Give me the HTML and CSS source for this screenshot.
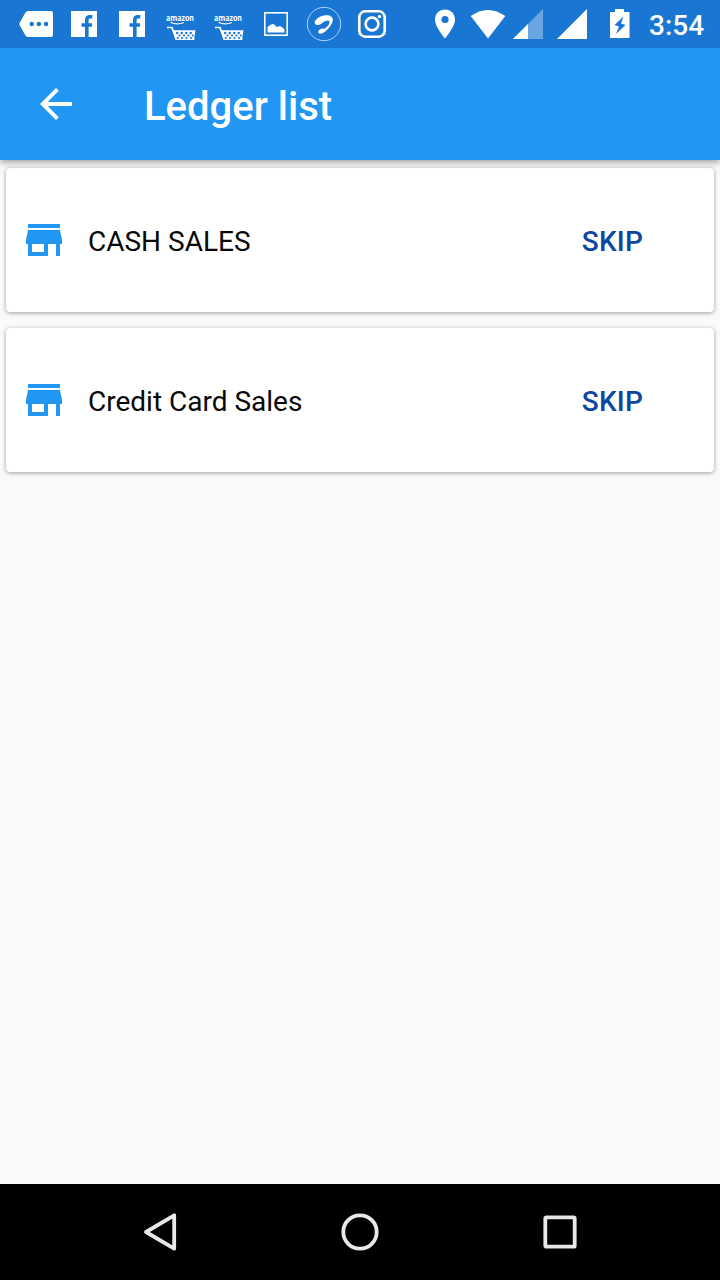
FILE: index.html
```html
<!DOCTYPE html>
<html lang="en">
<head>
<meta charset="utf-8">
<title>Ledger list</title>
<link rel="stylesheet" href="styles.css">
</head>
<body>
<svg class="symbols" aria-hidden="true">
  <symbol id="facebook" viewBox="0 0 48 48">
    <rect x="11" y="11" width="26" height="26" fill="#fff"/>
    <path d="M32.300 16.700h-2.300q-3.200 0-3.200 3.200V37M21.500 25h10.500" fill="none" stroke="#1976d2" stroke-width="3.600"/>
  </symbol>
  <symbol id="cart" viewBox="0 0 48 48">
    <path d="M14.500 22.200q6 3 13.500 .3" fill="none" stroke="#fff" stroke-width="1.200"/>
    <path d="M11 27.500h5l4 11.500h18.500" fill="none" stroke="#fff" stroke-width="1.700"/>
    <path d="M17 30.300h22.500l-1.500 9.400H20z" fill="#fff"/>
    <g fill="#1976d2"><circle cx="21.200" cy="33" r="1.200"/><circle cx="25.700" cy="33" r="1.200"/><circle cx="30.200" cy="33" r="1.200"/><circle cx="34.700" cy="33" r="1.200"/><circle cx="23.500" cy="35.500" r="1.100"/><circle cx="28" cy="35.500" r="1.100"/><circle cx="32.500" cy="35.500" r="1.100"/><circle cx="36.700" cy="35.500" r="1"/><circle cx="21.700" cy="38" r="1.100"/><circle cx="26" cy="38" r="1.100"/><circle cx="30.500" cy="38" r="1.100"/><circle cx="35" cy="38" r="1.100"/></g>
  </symbol>
  <symbol id="store" viewBox="0 0 24 24">
    <path d="M20 4H4v2h16V4zm1 10v-2l-1-5H4l-1 5v2h1v6h10v-6h4v6h2v-6h1zm-9 4H6v-4h6v4z" fill="#2196f3"/>
  </symbol>
</svg>

<div class="screen">
  <div class="status-bar">
    <div class="notifications">
      <svg class="status-icon" viewBox="0 0 48 48">
        <path d="M16 11h23q2 0 2 2v22q0 2-2 2H16q-1.500 0-2.500-1.500L7 24l6.500-11.500Q14.500 11 16 11z" fill="#fff"/>
        <g fill="#1976d2"><circle cx="19.700" cy="24" r="2.200"/><circle cx="26.900" cy="24" r="2.200"/><circle cx="34.100" cy="24" r="2.200"/></g>
      </svg>
      <svg class="status-icon"><use href="#facebook"/></svg>
      <svg class="status-icon"><use href="#facebook"/></svg>
      <svg class="status-icon" viewBox="0 0 48 48"><text class="amazon-text" x="10" y="20.500" textLength="28" lengthAdjust="spacingAndGlyphs">amazon</text><use href="#cart"/></svg>
      <svg class="status-icon" viewBox="0 0 48 48"><text class="amazon-text" x="10" y="20.500" textLength="28" lengthAdjust="spacingAndGlyphs">amazon</text><use href="#cart"/></svg>
      <svg class="status-icon" viewBox="0 0 48 48">
        <rect x="12.800" y="12.800" width="22.400" height="22.400" fill="none" stroke="#fff" stroke-width="1.600"/>
        <path d="M15.500 32.500V27l2-1.500 1.500-1 2.500-.5 3.500 3 3-1 2.500 1.500 2 2v3z" fill="#fff"/>
      </svg>
      <svg class="status-icon" viewBox="0 0 48 48">
        <circle cx="24" cy="24" r="16.700" fill="none" stroke="#a9d4fa" stroke-width="1"/>
        <path d="M17 25C12.500 24 15 19 20.500 16.500c6-2.500 12-1.500 12.300 3 .2 4.500-5.300 11-9.800 13.500-2.500 1.300-5 .8-4.700-1.200.3-2.300 3.500-4 5.700-2.800 2.500-1.500 5.500-4.500 5.500-7 0-2-2.500-2-5-.5-2.500 1.400-4.500 4-7.500 3.500z" fill="#fff"/>
      </svg>
      <svg class="status-icon" viewBox="0 0 48 48" fill="none" stroke="#fff">
        <rect x="11.300" y="11.300" width="25.400" height="25.400" rx="6" stroke-width="2.600"/>
        <circle cx="24" cy="24" r="6.400" stroke-width="2.600"/>
        <circle cx="31.500" cy="16.500" r="1.700" fill="#fff" stroke="none"/>
      </svg>
    </div>
    <svg class="system-icons" viewBox="0 0 216 48" fill="#fff">
      <path d="M25 9.500c-5.700 0-10 4.300-10 10C15 27 25 38.500 25 38.500S35 27 35 19.500c0-5.700-4.300-10-10-10zm0 13.600a3.600 3.600 0 1 1 0-7.200 3.600 3.600 0 0 1 0 7.200z"/>
      <path d="M50.700 16q17.300-12 34.600 0L68 38.500z"/>
      <path d="M93 39h30V9z" fill-opacity=".35"/>
      <path d="M93 39h15V24z"/>
      <path d="M137 39h30V9z"/>
      <path d="M195 9h9v3h5.500v26H190V12h5z"/>
      <path d="M203.500 16.500l-9 8.500 4.500 1.500-3 7.500 9.500-9-4.500-1.500z" fill="#1976d2"/>
    </svg>
    <span class="clock">3:54</span>
  </div>

  <header class="app-bar">
    <svg class="back" viewBox="0 0 24 24"><path d="M20 11H7.830l5.590-5.590L12 4l-8 8 8 8 1.410-1.410L7.830 13H20v-2z" fill="#fff"/></svg>
    <h1 class="title">Ledger list</h1>
  </header>

  <main class="ledgers">
    <article class="card">
      <svg class="store"><use href="#store"/></svg>
      <span class="name">CASH SALES</span>
      <button class="skip">SKIP</button>
    </article>
    <article class="card">
      <svg class="store"><use href="#store"/></svg>
      <span class="name">Credit Card Sales</span>
      <button class="skip">SKIP</button>
    </article>
  </main>

  <nav class="nav-bar">
    <svg class="nav-icon" viewBox="0 0 48 48"><path d="M38.200 7.300v33.400L10 24z"/></svg>
    <svg class="nav-icon" viewBox="0 0 48 48"><circle cx="24" cy="24" r="16.700"/></svg>
    <svg class="nav-icon" viewBox="0 0 48 48"><rect x="9.300" y="9.300" width="29.400" height="29.400" rx="1"/></svg>
  </nav>
</div>
</body>
</html>
```
FILE: styles.css
```css
* { box-sizing: border-box; }
body {
  margin: 0;
  font-family: Roboto, "Liberation Sans", sans-serif;
}
svg { display: block; flex: none; }
.symbols { position: absolute; width: 0; height: 0; }
.screen {
  display: flex;
  flex-direction: column;
  width: 720px;
  height: 1280px;
  background: #fafafa;
  overflow: hidden;
}
.status-bar {
  z-index: 2;
  display: flex;
  align-items: center;
  height: 48px;
  padding-left: 12px;
  background: #1976d2;
  color: #fff;
}
.notifications { display: flex; width: 408px; }
.status-icon { width: 48px; height: 48px; }
.amazon-text { font: 700 8.5px "Open Sans", sans-serif; fill: #fff; }
.system-icons { width: 216px; height: 48px; }
.clock {
  padding: 4px 0 0 13px;
  font-size: 28px;
  font-weight: 500;
  line-height: 48px;
}
.app-bar {
  z-index: 1;
  display: flex;
  align-items: center;
  gap: 64px;
  height: 112px;
  padding-left: 32px;
  background: #2196f3;
  box-shadow: 0 2px 7px rgba(0, 0, 0, .4);
}
.back { width: 48px; height: 48px; }
.title {
  margin: 0;
  padding-top: 6px;
  color: #fff;
  font-size: 40px;
  font-weight: 500;
  line-height: 48px;
}
.ledgers {
  display: flex;
  flex: 1;
  flex-direction: column;
  gap: 16px;
  padding: 8px 6px;
}
.card {
  display: flex;
  align-items: center;
  height: 144px;
  padding: 0 71px 0 14px;
  border-radius: 4px;
  background: #fff;
  box-shadow: 0 1px 4px rgba(0, 0, 0, .38);
}
.store { width: 48px; height: 48px; }
.name {
  flex: 1;
  padding: 4px 0 0 20px;
  color: #080808;
  font-size: 28px;
  line-height: 34px;
}
.skip {
  padding: 4px 0 0;
  border: 0;
  background: none;
  color: #0d47a1;
  font: 500 28px/34px Roboto, sans-serif;
  letter-spacing: .2px;
}
.nav-bar {
  display: flex;
  align-items: center;
  justify-content: center;
  gap: 152px;
  height: 96px;
  background: #000;
}
.nav-icon {
  width: 48px;
  height: 48px;
  fill: none;
  stroke: #e8e8e8;
  stroke-width: 3.800;
  stroke-linejoin: round;
}
```
